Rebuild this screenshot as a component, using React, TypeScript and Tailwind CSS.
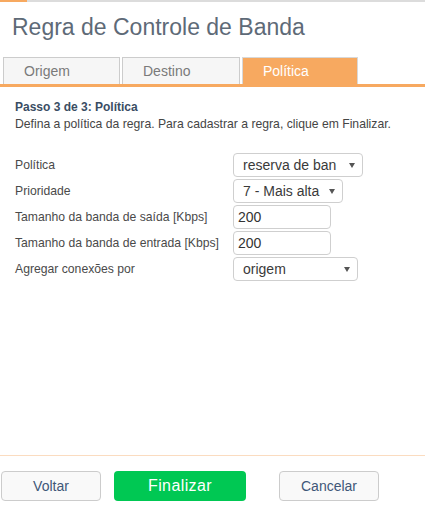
import React from "react";

function Arrow() {
  return (
    <svg width="6" height="5" viewBox="0 0 6 5" className="shrink-0">
      <polygon points="0,0 6,0 3,5" fill="#555" />
    </svg>
  );
}

function FakeSelect({ value, width }: { value: string; width: string }) {
  return (
    <div
      className={`${width} h-[24px] border border-[#cfcfcf] rounded-[4px] bg-white flex items-center pl-[9px] pr-[7px]`}
    >
      <span className="flex-1 whitespace-nowrap text-[14px] text-[#3a3a3a] leading-[22px]">
        {value}
      </span>
      <span className="ml-[6px] flex items-center">
        <Arrow />
      </span>
    </div>
  );
}

function FakeInput({ value }: { value: string }) {
  return (
    <div className="w-[98px] h-[24px] border border-[#cfcfcf] rounded-[4px] bg-white flex items-center pl-[4px]">
      <span className="text-[14px] text-[#333] leading-[22px]">{value}</span>
    </div>
  );
}

function Row({ label, children }: { label: string; children: React.ReactNode }) {
  return (
    <div className="flex items-center h-[24px]">
      <div className="w-[218px] text-[12.2px] text-[#4a4a4a]">{label}</div>
      {children}
    </div>
  );
}

export default function App() {
  return (
    <div className="w-[425px] h-[515px] bg-white flex flex-col font-['Liberation_Sans',Arial,sans-serif]">
      <div className="h-[2px] bg-[#dcdcdc] flex">
        <div className="w-[27px] bg-[#f7a960]" />
      </div>
      <div className="mt-[11px] pl-[12px] h-[28px] leading-[28px] text-[23px] text-[#5e6a77]">
        Regra de Controle de Banda
      </div>
      <div className="mt-[16px] flex pl-[3px] h-[27px]">
        <div className="w-[117px] border border-b-0 border-[#cccccc] bg-[#f6f6f6] pl-[20px] text-[14px] leading-[26px] text-[#7a7a7a]">
          Origem
        </div>
        <div className="ml-[2px] w-[118px] border border-b-0 border-[#cccccc] bg-[#f6f6f6] pl-[20px] text-[14px] leading-[26px] text-[#7a7a7a]">
          Destino
        </div>
        <div className="ml-[2px] w-[116px] border border-b-0 border-[#d8d8d8] bg-[#f7a960] pl-[20px] text-[14px] leading-[26px] text-white">
          Política
        </div>
      </div>
      <div className="h-[3px] bg-[#f7a960]" />
      <div className="pl-[15px] mt-[12px]">
        <div className="text-[12px] font-bold text-[#3a4d63] leading-[17px]">
          Passo 3 de 3: Política
        </div>
        <div className="text-[12.2px] text-[#454545] leading-[17px]">
          Defina a política da regra. Para cadastrar a regra, clique em Finalizar.
        </div>
      </div>
      <div className="pl-[15px] mt-[20px] flex flex-col gap-[2px]">
        <Row label="Política">
          <FakeSelect value="reserva de ban" width="w-[130px]" />
        </Row>
        <Row label="Prioridade">
          <FakeSelect value="7 - Mais alta" width="w-[110px]" />
        </Row>
        <Row label="Tamanho da banda de saída [Kbps]">
          <FakeInput value="200" />
        </Row>
        <Row label="Tamanho da banda de entrada [Kbps]">
          <FakeInput value="200" />
        </Row>
        <Row label="Agregar conexões por">
          <FakeSelect value="origem" width="w-[125px]" />
        </Row>
      </div>
      <div className="flex-1" />
      <div className="h-[1px] bg-[#fbdcc0]" />
      <div className="flex items-center pl-[1px] pt-[15px] pb-[14px]">
        <button className="w-[100px] h-[30px] border border-[#cccccc] rounded-[4px] bg-[#f9f9f9] text-[14px] text-[#3f5778]">
          Voltar
        </button>
        <button className="ml-[13px] w-[132px] h-[30px] rounded-[4px] bg-[#00c853] text-[16px] tracking-[0.4px] text-white">
          Finalizar
        </button>
        <button className="ml-[33px] w-[100px] h-[30px] border border-[#cccccc] rounded-[4px] bg-[#f9f9f9] text-[14px] text-[#3f5778]">
          Cancelar
        </button>
      </div>
    </div>
  );
}
